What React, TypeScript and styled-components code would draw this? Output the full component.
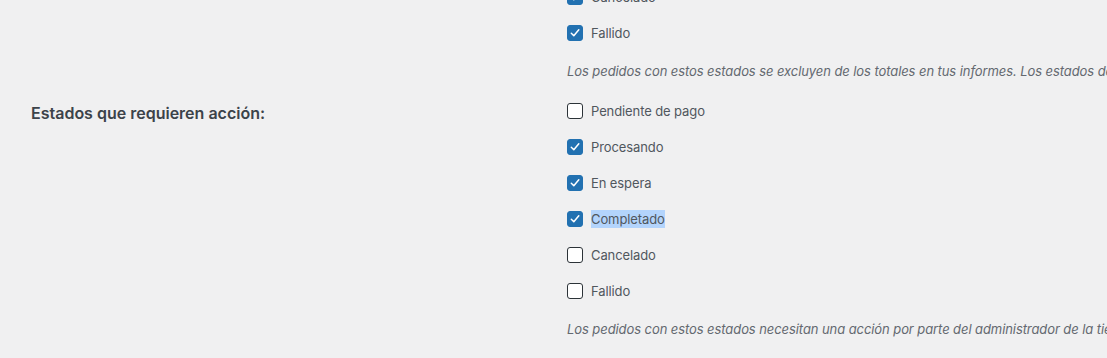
import React from "react";
import styled, { createGlobalStyle } from "styled-components";

const Global = createGlobalStyle`
  html, body { margin: 0; padding: 0; background: #f0f0f1; }
  body {
    font-family: Inter, "Noto Sans", "Liberation Sans", sans-serif;
    -webkit-font-smoothing: antialiased;
    overflow: hidden;
  }
`;

const Page = styled.div`
  width: 1107px;
  height: 358px;
  overflow: hidden;
  padding-left: 31px;
  box-sizing: border-box;
`;

const Sheet = styled.div`
  margin-top: -21px;
  display: flex;
  flex-direction: column;
  gap: 12px;
`;

const SettingRow = styled.div`
  display: grid;
  grid-template-columns: 536px 1fr;
`;

const Heading = styled.div`
  font-size: 16px;
  font-weight: 600;
  line-height: 22px;
  color: #3c434a;
  padding-top: 9px;
`;

const Field = styled.div`
  display: flex;
  flex-direction: column;
  min-width: 0;
`;

const Options = styled.div`
  display: flex;
  flex-direction: column;
`;

const Option = styled.label`
  height: 36px;
  display: flex;
  align-items: center;
  gap: 8px;
  font-size: 13px;
  color: #50575e;
  white-space: nowrap;
`;

const Box = styled.span<{ $checked: boolean }>`
  width: 16px;
  height: 16px;
  box-sizing: border-box;
  border-radius: 3px;
  flex: none;
  display: flex;
  align-items: center;
  justify-content: center;
  background: ${(p) => (p.$checked ? "#2271b1" : "#ffffff")};
  border: 1px solid ${(p) => (p.$checked ? "#2271b1" : "#2c3338")};
`;

const Text = styled.span<{ $selected?: boolean }>`
  line-height: 18px;
  letter-spacing: -0.1px;
  background: ${(p) => (p.$selected ? "#b3d4fc" : "transparent")};
`;

const Description = styled.p`
  margin: 10px 0 0;
  font-size: 13px;
  line-height: 20px;
  font-style: italic;
  letter-spacing: -0.08px;
  color: #646970;
  white-space: nowrap;
`;

const Check = () => (
  <svg width="12" height="12" viewBox="0 0 12 12" fill="none">
    <path d="M2.3 6.3 L4.8 8.8 L9.8 2.8" stroke="#fff" strokeWidth="1.5" strokeLinecap="round" strokeLinejoin="round" />
  </svg>
);

type Opt = { label: string; checked: boolean; selected?: boolean };

const CheckOption = ({ label, checked, selected }: Opt) => (
  <Option>
    <Box $checked={checked}>{checked && <Check />}</Box>
    <Text $selected={selected}>{label}</Text>
  </Option>
);

const excluded: Opt[] = [
  { label: "Cancelado", checked: true },
  { label: "Fallido", checked: true },
];

const actionable: Opt[] = [
  { label: "Pendiente de pago", checked: false },
  { label: "Procesando", checked: true },
  { label: "En espera", checked: true },
  { label: "Completado", checked: true, selected: true },
  { label: "Cancelado", checked: false },
  { label: "Fallido", checked: false },
];

export default function App() {
  return (
    <Page>
      <Global />
      <Sheet>
        <SettingRow>
          <Heading />
          <Field>
            <Options>
              {excluded.map((o) => (
                <CheckOption key={o.label} {...o} />
              ))}
            </Options>
            <Description>
              Los pedidos con estos estados se excluyen de los totales en tus informes. Los estados de
            </Description>
          </Field>
        </SettingRow>
        <SettingRow>
          <Heading>Estados que requieren acción:</Heading>
          <Field>
            <Options>
              {actionable.map((o) => (
                <CheckOption key={o.label} {...o} />
              ))}
            </Options>
            <Description>
              Los pedidos con estos estados necesitan una acción por parte del administrador de la tienda.
            </Description>
          </Field>
        </SettingRow>
      </Sheet>
    </Page>
  );
}
